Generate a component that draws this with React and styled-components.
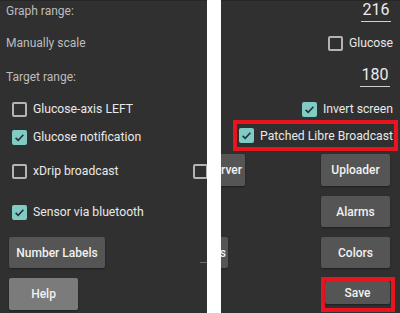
import styled, { createGlobalStyle } from "styled-components";

// Two halves of the settings screen, side by side, with two red callouts.

const Global = createGlobalStyle`
  html, body {
    margin: 0;
    padding: 0;
    background: #ffffff;
  }
  body {
    font-family: Roboto, "Noto Sans", "Liberation Sans", sans-serif;
  }
`;

const Frame = styled.div`
  display: flex;
  width: 400px;
  height: 313px;
  background: #ffffff;
  overflow: hidden;
`;

const Panel = styled.div`
  width: ${({ $w }) => $w}px;
  height: 313px;
  flex: none;
  background: #303030;
  border-top: 1px solid #262626;
  box-sizing: border-box;
  overflow: hidden;
  display: flex;
  flex-direction: column;
  padding: ${({ $pad }) => $pad};
`;

const Spacer = styled.div`
  width: 14px;
  flex: none;
`;

const Row = styled.div`
  display: flex;
  align-items: center;
  justify-content: ${({ $justify }) => $justify || "flex-start"};
  height: ${({ $h }) => $h}px;
  margin-top: ${({ $mt }) => $mt || 0}px;
  flex: none;
`;

const Label = styled.span`
  font-size: 12px;
  color: #bdbdbd;
  white-space: nowrap;
`;

const Check = styled.label`
  display: flex;
  align-items: center;
  gap: 6px;
  font-size: 12.2px;
  color: #e8e8e8;
  white-space: nowrap;
  margin-left: ${({ $ml }) => $ml || 0}px;
`;

const Box = styled.span`
  width: 15px;
  height: 15px;
  box-sizing: border-box;
  border-radius: 2px;
  flex: none;
  display: flex;
  align-items: center;
  justify-content: center;
  border: ${({ $on }) => ($on ? "none" : "2px solid #b3b3b3")};
  background: ${({ $on }) => ($on ? "#80cbc4" : "transparent")};
`;

const CheckBox = ({ on, children, ml }) => (
  <Check $ml={ml}>
    <Box $on={on}>
      {on && (
        <svg width="11" height="11" viewBox="0 0 11 11">
          <path
            d="M1.6 5.8 L4.2 8.3 L9.4 2.8"
            fill="none"
            stroke="#263238"
            strokeWidth="1.6"
          />
        </svg>
      )}
    </Box>
    {children}
  </Check>
);

const Button = styled.div`
  height: ${({ $h }) => $h || 31}px;
  width: ${({ $w }) => $w}px;
  flex: none;
  box-sizing: border-box;
  display: flex;
  align-items: center;
  justify-content: ${({ $align }) => $align || "center"};
  padding-right: ${({ $pr }) => $pr || 0}px;
  margin-left: ${({ $ml }) => $ml || 0}px;
  margin-right: ${({ $mr }) => $mr || 0}px;
  background: ${({ $light }) => ($light ? "#7b7b7b" : "#555555")};
  border-radius: 2px;
  box-shadow: 0 1px 2px rgba(0, 0, 0, 0.35);
  color: #f2f2f2;
  font-size: 12px;
  font-weight: 500;
  white-space: nowrap;
  overflow: hidden;
`;

const NumberField = styled.span`
  width: 30px;
  box-sizing: border-box;
  text-align: center;
  font-size: 16px;
  line-height: 18px;
  padding-bottom: 2px;
  color: #ececec;
  border-bottom: 1px solid #d0d0d0;
  margin-right: ${({ $mr }) => $mr}px;
`;

const Callout = styled.div`
  border: 4px solid #e8141f;
  box-sizing: border-box;
  display: flex;
  align-items: center;
  justify-content: flex-end;
  flex: none;
  width: ${({ $w }) => $w}px;
  height: ${({ $h }) => $h}px;
  padding: ${({ $pad }) => $pad || 0};
  margin-left: auto;
  margin-right: ${({ $mr }) => $mr || 0}px;
  margin-top: ${({ $mt }) => $mt || 0}px;
`;

const TextStub = styled.span`
  margin-left: auto;
  width: 10px;
  height: 20px;
  box-sizing: border-box;
  border-bottom: 1px solid #6a6a6a;
  color: #f0f0f0;
  font-size: 12px;
  line-height: 14px;
  padding-left: 7px;
  margin-right: -3px;
`;

export default function App() {
  return (
    <Frame>
      <Global />
      <Panel $w={207} $pad="0 0 0 6px">
        <Row $h={20}>
          <Label>Graph range:</Label>
        </Row>
        <Row $h={20} $mt={12}>
          <Label>Manually scale</Label>
        </Row>
        <Row $h={20} $mt={14}>
          <Label>Target range:</Label>
        </Row>
        <Row $h={20} $mt={12}>
          <CheckBox ml={6}>Glucose-axis LEFT</CheckBox>
        </Row>
        <Row $h={20} $mt={8}>
          <CheckBox on ml={6}>
            Glucose notification
          </CheckBox>
        </Row>
        <Row $h={20} $mt={14}>
          <CheckBox ml={6}>xDrip broadcast</CheckBox>
          <Box style={{ marginLeft: "auto", marginRight: -1 }} />
        </Row>
        <Row $h={20} $mt={21}>
          <CheckBox on ml={6}>
            Sensor via bluetooth
          </CheckBox>
        </Row>
        <Row $h={31} $mt={15}>
          <Button $w={96} $ml={3}>
            Number Labels
          </Button>
          <TextStub>L</TextStub>
        </Row>
        <Row $h={32} $mt={10}>
          <Button $w={69} $h={32} $ml={3} $light>
            Help
          </Button>
        </Row>
      </Panel>
      <Spacer />
      <Panel $w={179} $pad="0 7px 0 0">
        <Row $h={21} $justify="flex-end">
          <NumberField $mr={2}>216</NumberField>
        </Row>
        <Row $h={20} $mt={11} $justify="flex-end">
          <CheckBox>Glucose</CheckBox>
        </Row>
        <Row $h={21} $mt={13} $justify="flex-end">
          <NumberField $mr={3}>180</NumberField>
        </Row>
        <Row $h={20} $mt={12} $justify="flex-end">
          <CheckBox on>Invert screen</CheckBox>
        </Row>
        <Callout $w={165} $h={31} $mr={-5} $mt={1} $pad="0 1px 0 0">
          <CheckBox on>Patched Libre Broadcast</CheckBox>
        </Callout>
        <Row $h={32} $mt={3} $justify="space-between">
          <Button $w={60} $h={32} $ml={-36} $align="flex-end" $pr={3}>
            Server
          </Button>
          <Button $w={69} $h={32} $mr={3}>
            Uploader
          </Button>
        </Row>
        <Row $h={31} $mt={10} $justify="flex-end">
          <Button $w={69} $mr={3}>
            Alarms
          </Button>
        </Row>
        <Row $h={31} $mt={10} $justify="space-between">
          <Button $w={40} $ml={-33} $align="flex-end" $pr={2}>
            Labels
          </Button>
          <Button $w={69} $mr={3}>
            Colors
          </Button>
        </Row>
        <Callout $w={74} $h={35} $mr={-2} $mt={9} $pad="0 1px 4px 0">
          <Button $w={65} $h={23}>
            Save
          </Button>
        </Callout>
      </Panel>
    </Frame>
  );
}
